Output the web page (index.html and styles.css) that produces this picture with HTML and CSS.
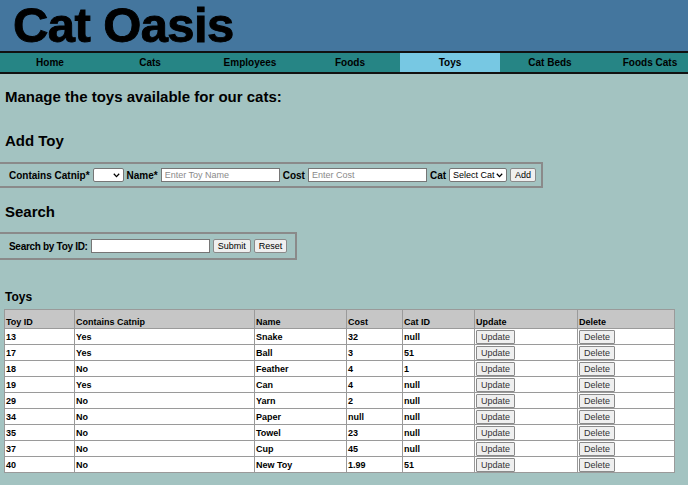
FILE: index.html
```html
<!DOCTYPE html>
<html>
<head>
<meta charset="utf-8">
<title>Cat Oasis - Toys</title>
<link rel="stylesheet" href="styles.css">
</head>
<body>
<header class="banner">
  <h1 class="title">Cat Oasis</h1>
</header>
<nav class="nav">
  <a class="nav-item">Home</a>
  <a class="nav-item">Cats</a>
  <a class="nav-item">Employees</a>
  <a class="nav-item">Foods</a>
  <a class="nav-item active">Toys</a>
  <a class="nav-item">Cat Beds</a>
  <a class="nav-item">Foods Cats</a>
</nav>
<main class="content">
  <h2 class="intro">Manage the toys available for our cats:</h2>
  <h2 class="section">Add Toy</h2>
  <form class="box add-box">
    <label class="lbl">Contains Catnip*</label>
    <span class="sel-wrap">
      <select class="sel sel-catnip"><option></option></select>
      <svg class="chev" width="7" height="5" viewBox="0 0 7 5"><path d="M0.8 0.8 L3.5 3.6 L6.2 0.8" fill="none" stroke="#000" stroke-width="1.3"/></svg>
    </span>
    <label class="lbl">Name*</label>
    <input class="txt" type="text" placeholder="Enter Toy Name">
    <label class="lbl">Cost</label>
    <input class="txt" type="text" placeholder="Enter Cost">
    <label class="lbl">Cat</label>
    <span class="sel-wrap">
      <select class="sel sel-cat"><option>Select Cat</option></select>
      <svg class="chev" width="7" height="5" viewBox="0 0 7 5"><path d="M0.8 0.8 L3.5 3.6 L6.2 0.8" fill="none" stroke="#000" stroke-width="1.3"/></svg>
    </span>
    <button class="btn" type="button">Add</button>
  </form>
  <h2 class="section search-title">Search</h2>
  <form class="box search-box">
    <label class="lbl lbl-search">Search by Toy ID:</label>
    <input class="txt" type="text">
    <button class="btn" type="button">Submit</button>
    <button class="btn" type="button">Reset</button>
  </form>
  <h3 class="table-title">Toys</h3>
  <table class="toys">
    <colgroup>
      <col class="c1"><col class="c2"><col class="c3"><col class="c4"><col class="c5"><col class="c6"><col class="c7">
    </colgroup>
    <thead>
      <tr><th>Toy ID</th><th>Contains Catnip</th><th>Name</th><th>Cost</th><th>Cat ID</th><th>Update</th><th>Delete</th></tr>
    </thead>
    <tbody>
      <tr><td>13</td><td>Yes</td><td>Snake</td><td>32</td><td>null</td><td><button class="rbtn">Update</button></td><td><button class="rbtn">Delete</button></td></tr>
      <tr><td>17</td><td>Yes</td><td>Ball</td><td>3</td><td>51</td><td><button class="rbtn">Update</button></td><td><button class="rbtn">Delete</button></td></tr>
      <tr><td>18</td><td>No</td><td>Feather</td><td>4</td><td>1</td><td><button class="rbtn">Update</button></td><td><button class="rbtn">Delete</button></td></tr>
      <tr><td>19</td><td>Yes</td><td>Can</td><td>4</td><td>null</td><td><button class="rbtn">Update</button></td><td><button class="rbtn">Delete</button></td></tr>
      <tr><td>29</td><td>No</td><td>Yarn</td><td>2</td><td>null</td><td><button class="rbtn">Update</button></td><td><button class="rbtn">Delete</button></td></tr>
      <tr><td>34</td><td>No</td><td>Paper</td><td>null</td><td>null</td><td><button class="rbtn">Update</button></td><td><button class="rbtn">Delete</button></td></tr>
      <tr><td>35</td><td>No</td><td>Towel</td><td>23</td><td>null</td><td><button class="rbtn">Update</button></td><td><button class="rbtn">Delete</button></td></tr>
      <tr><td>37</td><td>No</td><td>Cup</td><td>45</td><td>null</td><td><button class="rbtn">Update</button></td><td><button class="rbtn">Delete</button></td></tr>
      <tr><td>40</td><td>No</td><td>New Toy</td><td>1.99</td><td>51</td><td><button class="rbtn">Update</button></td><td><button class="rbtn">Delete</button></td></tr>
    </tbody>
  </table>
</main>
</body>
</html>
```

FILE: styles.css
```css
html, body {
  margin: 0;
  padding: 0;
  background: #a3c3c1;
  font-family: "Liberation Sans", Arial, sans-serif;
  color: #000;
  overflow: hidden;
}

.banner {
  background: #44769e;
  height: 51px;
  border-bottom: 2px solid #111;
}

.title {
  margin: 0;
  padding: 3px 0 0 13px;
  font-size: 49px;
  line-height: 45px;
  font-weight: bold;
  letter-spacing: -0.6px;
  -webkit-text-stroke: 0.9px #000;
  color: #000;
}

.nav {
  display: flex;
  background: #268585;
  height: 19px;
  border-bottom: 2px solid #111;
  overflow: hidden;
}

.nav-item {
  flex: 0 0 100px;
  text-align: center;
  font-size: 10px;
  font-weight: bold;
  line-height: 19px;
  color: #000;
}

.nav-item.active {
  background: #77c8e3;
}

.intro {
  margin: 14px 0 0 5px;
  font-size: 15px;
  line-height: 18px;
  font-weight: bold;
}

.section {
  margin: 26px 0 0 5px;
  font-size: 15px;
  line-height: 18px;
  font-weight: bold;
}

.search-title {
  margin-top: 15px;
}

.box {
  display: flex;
  align-items: center;
  gap: 3px;
  border: 2px solid #8a8a8a;
  border-left: 0;
  box-sizing: border-box;
  height: 26px;
  padding: 0 0 0 9px;
}

.box > * {
  flex-shrink: 0;
  white-space: nowrap;
}

.add-box {
  width: 543px;
  margin-top: 12px;
}

.search-box {
  width: 297px;
  height: 28px;
  margin-top: 11px;
}

.lbl {
  font-size: 10px;
  font-weight: bold;
}

.lbl-search {
  letter-spacing: -0.3px;
}

.sel-wrap {
  position: relative;
  display: inline-flex;
}

.sel {
  appearance: none;
  -webkit-appearance: none;
  font-family: "Liberation Sans", Arial, sans-serif;
  font-size: 9px;
  height: 14px;
  padding: 0 0 0 3px;
  border: 1px solid #767676;
  border-radius: 2px;
  background: #fff;
  color: #000;
  box-sizing: border-box;
  line-height: 12px;
}

.chev {
  position: absolute;
  right: 4px;
  top: 5px;
  pointer-events: none;
}

.sel-catnip {
  width: 31px;
}

.sel-cat {
  width: 58px;
}

.txt {
  font-family: "Liberation Sans", Arial, sans-serif;
  font-size: 9px;
  width: 119px;
  height: 14px;
  padding: 0 3px;
  border: 1px solid #767676;
  box-sizing: border-box;
  background: #fff;
}

.txt::placeholder {
  color: #8a8a8a;
}

.btn {
  font-family: "Liberation Sans", Arial, sans-serif;
  font-size: 9px;
  height: 14px;
  padding: 0 4px;
  border: 1px solid #8a8a8a;
  border-radius: 2px;
  background: #efefef;
  color: #000;
  line-height: 12px;
}

.table-title {
  margin: 30px 0 0 5px;
  font-size: 12px;
  line-height: 14px;
  font-weight: bold;
}

.toys {
  margin: 5px 0 0 4px;
  width: 670px;
  border-collapse: collapse;
  border: 1px solid #000;
  background: #fff;
  table-layout: fixed;
}

.c1 { width: 70px; }
.c2 { width: 180px; }
.c3 { width: 92px; }
.c4 { width: 56px; }
.c5 { width: 72px; }
.c6 { width: 103px; }
.c7 { width: 97px; }

.toys th, .toys td {
  border: 1px solid #9a9a9a;
  padding: 0 1px;
  font-size: 9px;
  font-weight: bold;
  text-align: left;
  height: 15px;
  line-height: 12px;
}

.toys th {
  background: #c6c6c6;
  height: 19px;
  padding-top: 4px;
  box-sizing: border-box;
  vertical-align: bottom;
}

.rbtn {
  font-family: "Liberation Sans", Arial, sans-serif;
  font-size: 9px;
  height: 14px;
  padding: 0 4px;
  border: 1px solid #8a8a8a;
  border-radius: 1px;
  background: #efefef;
  color: #333;
  line-height: 12px;
  display: block;
}
```
